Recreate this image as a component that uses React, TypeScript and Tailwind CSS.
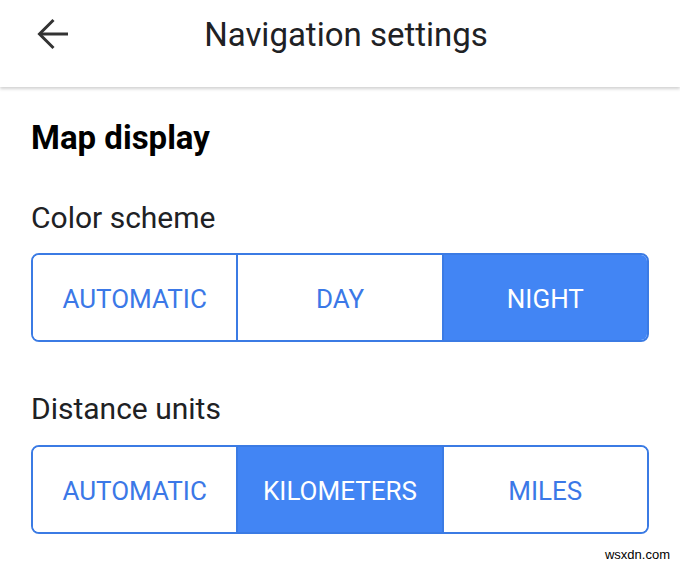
const colorOptions = ["AUTOMATIC", "DAY", "NIGHT"];
const distanceOptions = ["AUTOMATIC", "KILOMETERS", "MILES"];

function BackArrow() {
  return (
    <svg width="32" height="32" viewBox="0 0 32 32" fill="none" stroke="#333333" strokeWidth="3">
      <path d="M31 16H3" />
      <path d="M16.5 2L2.5 16L16.5 30" />
    </svg>
  );
}

function Segmented({ options, selected }: { options: string[]; selected: number }) {
  return (
    <div className="flex h-[89px] overflow-hidden rounded-[8px] border-2 border-solid border-[#3b7be4]">
      {options.map((opt, i) => (
        <div
          key={opt}
          className={
            "flex flex-1 items-center justify-center pt-[3px] text-[26px] " +
            (i > 0 ? "border-l-2 border-solid border-[#3b7be4] " : "") +
            (i === selected ? "bg-[#4285f4] text-white" : "bg-white text-[#3b78e7]")
          }
        >
          {opt}
        </div>
      ))}
    </div>
  );
}

export default function App() {
  return (
    <div className="relative h-[567px] w-[680px] overflow-hidden bg-white font-['Roboto',sans-serif]">
      <header className="relative flex h-[87px] items-start pl-[12px] pt-[15px] shadow-[0_2px_3px_rgba(0,0,0,0.18)]">
        <div className="absolute left-[37px] top-[18px]">
          <BackArrow />
        </div>
        <h1 className="w-full text-center text-[33px] leading-[40px] text-[#202124]">
          Navigation settings
        </h1>
      </header>

      <main className="px-[31px] pt-[31px]">
        <h2 className="text-[33px] font-bold leading-[40px] text-black">Map display</h2>

        <p className="mt-[43px] text-[30px] leading-[34px] text-[#202124]">Color scheme</p>
        <div className="mt-[18px]">
          <Segmented options={colorOptions} selected={2} />
        </div>

        <p className="mt-[50px] text-[30px] leading-[34px] text-[#202124]">Distance units</p>
        <div className="mt-[19px]">
          <Segmented options={distanceOptions} selected={1} />
        </div>
      </main>

      <span className="absolute bottom-[3px] right-[10px] font-['Liberation_Sans',sans-serif] text-[13px] text-black">
        wsxdn.com
      </span>
    </div>
  );
}
